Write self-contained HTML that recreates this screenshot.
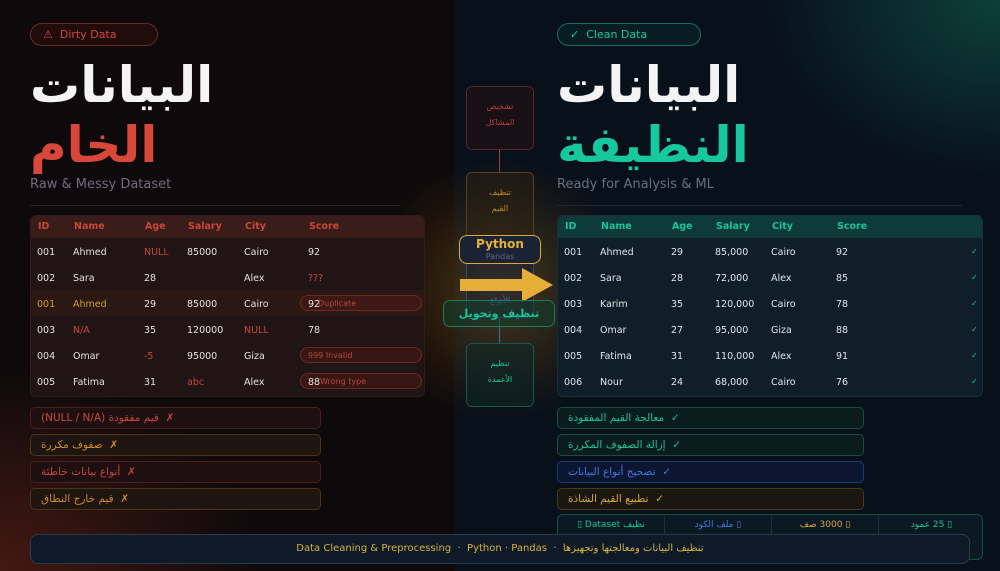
<!DOCTYPE html>
<html><head><meta charset="utf-8"><style>
*{margin:0;padding:0;box-sizing:border-box}
body{width:1000px;height:571px;overflow:hidden;position:relative;font-family:"DejaVu Sans","Liberation Sans","Noto Sans CJK SC",sans-serif;background:#0a0a0e}
.abs{position:absolute}
.bgL{left:0;top:0;width:455px;height:571px;background:radial-gradient(ellipse 260px 200px at 0px 571px,rgba(150,45,28,.4),transparent),#0e0a0b}
.bgR{left:455px;top:0;width:545px;height:571px;background:radial-gradient(ellipse 240px 180px at 545px 0px,rgba(20,130,100,.42),transparent),#08101a}
.glow{left:370px;top:160px;width:260px;height:260px;border-radius:50%;background:radial-gradient(circle,rgba(200,140,30,.32),rgba(120,70,10,.12) 55%,transparent 72%)}
.pill{height:23px;border-radius:12px;font-size:11px;line-height:21px;padding-left:12px}
.t1{font-size:50px;font-weight:bold;direction:rtl;line-height:60px;font-family:"DejaVu Sans","Noto Sans CJK SC",sans-serif}
.sub{font-size:13px;color:#6b6f7a}
.tbl{border-radius:6px;font-size:9.5px}
.hd{height:22px;border-radius:6px 6px 0 0;font-weight:bold;font-size:9.5px}
.c{position:absolute}
.iss{height:22px;border-radius:5px;font-size:10.5px;line-height:20px;direction:rtl;text-align:left;padding-left:10px}
.fb{border-radius:6px;font-size:8px;text-align:center;line-height:16px;direction:rtl}
</style></head><body>
<div class="abs bgL"></div><div class="abs bgR"></div><div class="abs glow"></div>

<div class="abs pill" style="left:30px;top:23px;width:128px;border:1px solid #6a2a22;color:#d24a3a;background:rgba(80,20,15,.3)">⚠&nbsp; Dirty Data</div>
<div class="abs t1" style="left:30px;top:55px;color:#f4f4f6">البيانات</div>
<div class="abs t1" style="left:30px;top:115px;color:#d9473a">الخام</div>
<div class="abs sub" style="left:30px;top:177px">Raw &amp; Messy Dataset</div>
<div class="abs" style="left:30px;top:205px;width:370px;height:1px;background:#2a2226"></div>

<div class="abs pill" style="left:557px;top:23px;width:144px;border:1px solid #16705c;color:#1fc79c;background:rgba(10,60,50,.3)">✓&nbsp; Clean Data</div>
<div class="abs t1" style="left:557px;top:55px;color:#f4f4f6">البيانات</div>
<div class="abs t1" style="left:557px;top:115px;color:#17c79d">النظيفة</div>
<div class="abs sub" style="left:557px;top:177px">Ready for Analysis &amp; ML</div>
<div class="abs" style="left:557px;top:205px;width:405px;height:1px;background:#1a2a33"></div>

<div class="abs tbl" style="left:30px;top:215px;width:395px;height:182px;background:#201414;border:1px solid #2e1c1a">
<div class="hd" style="background:#3a1c18;color:#c9473a;position:relative">
<span class="c" style="left:7px;top:5px">ID</span><span class="c" style="left:43px;top:5px">Name</span><span class="c" style="left:114px;top:5px">Age</span><span class="c" style="left:157px;top:5px">Salary</span><span class="c" style="left:214px;top:5px">City</span><span class="c" style="left:278px;top:5px">Score</span></div>
</div>
<div class="abs" style="left:30px;top:238px;width:395px;height:160px;color:#e6e2e2;font-size:9.5px">
<div style="position:absolute;top:0;height:26px;width:100%"><span class="c" style="left:7px;top:9px">001</span><span class="c" style="left:43px;top:9px">Ahmed</span><span class="c" style="left:114px;top:9px;color:#c9473a">NULL</span><span class="c" style="left:157px;top:9px">85000</span><span class="c" style="left:214px;top:9px">Cairo</span><span class="c" style="left:278px;top:9px">92</span></div>
<div style="position:absolute;top:26px;height:26px;width:100%"><span class="c" style="left:7px;top:9px">002</span><span class="c" style="left:43px;top:9px">Sara</span><span class="c" style="left:114px;top:9px">28</span><span class="c" style="left:214px;top:9px">Alex</span><span class="c" style="left:278px;top:9px;color:#c9473a">???</span></div>
<div style="position:absolute;top:52px;height:26px;width:100%;background:rgba(60,30,20,.4)"><span class="c" style="left:7px;top:9px;color:#c9a02a">001</span><span class="c" style="left:43px;top:9px;color:#c9a02a">Ahmed</span><span class="c" style="left:114px;top:9px">29</span><span class="c" style="left:157px;top:9px">85000</span><span class="c" style="left:214px;top:9px">Cairo</span><span class="c" style="left:270px;top:5px;width:122px;height:16px;border:1px solid #6a2a22;border-radius:8px;background:rgba(90,25,20,.4)"></span><span class="c" style="left:278px;top:9px">92</span><span class="c" style="left:288px;top:9px;font-size:8px;color:#b8473a">Duplicate</span></div>
<div style="position:absolute;top:78px;height:26px;width:100%"><span class="c" style="left:7px;top:9px">003</span><span class="c" style="left:43px;top:9px;color:#c9473a">N/A</span><span class="c" style="left:114px;top:9px">35</span><span class="c" style="left:157px;top:9px">120000</span><span class="c" style="left:214px;top:9px;color:#c9473a">NULL</span><span class="c" style="left:278px;top:9px">78</span></div>
<div style="position:absolute;top:104px;height:26px;width:100%"><span class="c" style="left:7px;top:9px">004</span><span class="c" style="left:43px;top:9px">Omar</span><span class="c" style="left:114px;top:9px;color:#c9473a">-5</span><span class="c" style="left:157px;top:9px">95000</span><span class="c" style="left:214px;top:9px">Giza</span><span class="c" style="left:270px;top:5px;width:122px;height:16px;border:1px solid #6a2a22;border-radius:8px;background:rgba(90,25,20,.4)"></span><span class="c" style="left:278px;top:9px;font-size:8px;color:#b8473a">999 Invalid</span></div>
<div style="position:absolute;top:130px;height:26px;width:100%"><span class="c" style="left:7px;top:9px">005</span><span class="c" style="left:43px;top:9px">Fatima</span><span class="c" style="left:114px;top:9px">31</span><span class="c" style="left:157px;top:9px;color:#c9473a">abc</span><span class="c" style="left:214px;top:9px">Alex</span><span class="c" style="left:270px;top:5px;width:122px;height:16px;border:1px solid #6a2a22;border-radius:8px;background:rgba(90,25,20,.4)"></span><span class="c" style="left:278px;top:9px">88</span><span class="c" style="left:290px;top:9px;font-size:8px;color:#b8473a">Wrong type</span></div>
</div>

<div class="abs tbl" style="left:557px;top:215px;width:426px;height:182px;background:#0f1e28;border:1px solid #16303a">
<div class="hd" style="background:#0f3a3a;color:#19c49a;position:relative">
<span class="c" style="left:7px;top:5px">ID</span><span class="c" style="left:43px;top:5px">Name</span><span class="c" style="left:114px;top:5px">Age</span><span class="c" style="left:158px;top:5px">Salary</span><span class="c" style="left:214px;top:5px">City</span><span class="c" style="left:279px;top:5px">Score</span></div>
</div>
<div class="abs" style="left:557px;top:240px;width:426px;height:157px;color:#e0e6ea;font-size:9.5px">
<div style="position:absolute;top:0;height:26px;width:100%"><span class="c" style="left:7px;top:7px">001</span><span class="c" style="left:43px;top:7px">Ahmed</span><span class="c" style="left:114px;top:7px">29</span><span class="c" style="left:158px;top:7px">85,000</span><span class="c" style="left:214px;top:7px">Cairo</span><span class="c" style="left:279px;top:7px">92</span><span class="c" style="left:414px;top:7px;color:#19c49a;font-size:8px">✓</span></div>
<div style="position:absolute;top:26px;height:26px;width:100%"><span class="c" style="left:7px;top:7px">002</span><span class="c" style="left:43px;top:7px">Sara</span><span class="c" style="left:114px;top:7px">28</span><span class="c" style="left:158px;top:7px">72,000</span><span class="c" style="left:214px;top:7px">Alex</span><span class="c" style="left:279px;top:7px">85</span><span class="c" style="left:414px;top:7px;color:#19c49a;font-size:8px">✓</span></div>
<div style="position:absolute;top:52px;height:26px;width:100%"><span class="c" style="left:7px;top:7px">003</span><span class="c" style="left:43px;top:7px">Karim</span><span class="c" style="left:114px;top:7px">35</span><span class="c" style="left:158px;top:7px">120,000</span><span class="c" style="left:214px;top:7px">Cairo</span><span class="c" style="left:279px;top:7px">78</span><span class="c" style="left:414px;top:7px;color:#19c49a;font-size:8px">✓</span></div>
<div style="position:absolute;top:78px;height:26px;width:100%"><span class="c" style="left:7px;top:7px">004</span><span class="c" style="left:43px;top:7px">Omar</span><span class="c" style="left:114px;top:7px">27</span><span class="c" style="left:158px;top:7px">95,000</span><span class="c" style="left:214px;top:7px">Giza</span><span class="c" style="left:279px;top:7px">88</span><span class="c" style="left:414px;top:7px;color:#19c49a;font-size:8px">✓</span></div>
<div style="position:absolute;top:104px;height:26px;width:100%"><span class="c" style="left:7px;top:7px">005</span><span class="c" style="left:43px;top:7px">Fatima</span><span class="c" style="left:114px;top:7px">31</span><span class="c" style="left:158px;top:7px">110,000</span><span class="c" style="left:214px;top:7px">Alex</span><span class="c" style="left:279px;top:7px">91</span><span class="c" style="left:414px;top:7px;color:#19c49a;font-size:8px">✓</span></div>
<div style="position:absolute;top:130px;height:26px;width:100%"><span class="c" style="left:7px;top:7px">006</span><span class="c" style="left:43px;top:7px">Nour</span><span class="c" style="left:114px;top:7px">24</span><span class="c" style="left:158px;top:7px">68,000</span><span class="c" style="left:214px;top:7px">Cairo</span><span class="c" style="left:279px;top:7px">76</span><span class="c" style="left:414px;top:7px;color:#19c49a;font-size:8px">✓</span></div>
</div>

<div class="abs iss" style="left:30px;top:407px;width:291px;border:1px solid #4a1e1c;background:#1e1011;color:#c9473a">✗&nbsp; قيم مفقودة (NULL / N/A)</div>
<div class="abs iss" style="left:30px;top:434px;width:291px;border:1px solid #4a3518;background:#1e1510;color:#d28a2a">✗&nbsp; صفوف مكررة</div>
<div class="abs iss" style="left:30px;top:461px;width:291px;border:1px solid #4a1e1c;background:#1e1011;color:#c9473a">✗&nbsp; أنواع بيانات خاطئة</div>
<div class="abs iss" style="left:30px;top:488px;width:291px;border:1px solid #4a3518;background:#1e1510;color:#d28a2a">✗&nbsp; قيم خارج النطاق</div>

<div class="abs iss" style="left:557px;top:407px;width:307px;border:1px solid #15503f;background:#0b1c1f;color:#19c49a">✓&nbsp; معالجة القيم المفقودة</div>
<div class="abs iss" style="left:557px;top:434px;width:307px;border:1px solid #15503f;background:#0b1c1f;color:#19c49a">✓&nbsp; إزالة الصفوف المكررة</div>
<div class="abs iss" style="left:557px;top:461px;width:307px;border:1px solid #1e3a7a;background:#0c1630;color:#3f7ae0">✓&nbsp; تصحيح أنواع البيانات</div>
<div class="abs iss" style="left:557px;top:488px;width:307px;border:1px solid #4a3a18;background:#1a1610;color:#d8a83a">✓&nbsp; تطبيع القيم الشاذة</div>

<div class="abs" style="left:557px;top:514px;width:426px;height:46px;border:1px solid #15503f;border-radius:6px;background:#0b1a22;font-size:9px">
<div class="c" style="left:0;top:0;width:107px;height:20px;border-right:1px solid #1a3040;text-align:center;line-height:20px;color:#19c49a;direction:rtl">نظيف Dataset ▯</div>
<div class="c" style="left:107px;top:0;width:107px;height:20px;border-right:1px solid #1a3040;text-align:center;line-height:20px;color:#3f7ae0;direction:rtl">▯ ملف الكود</div>
<div class="c" style="left:214px;top:0;width:107px;height:20px;border-right:1px solid #1a3040;text-align:center;line-height:20px;color:#d8a83a;direction:rtl">▯ 3000 صف</div>
<div class="c" style="left:321px;top:0;width:105px;height:20px;text-align:center;line-height:20px;color:#19c49a;direction:rtl">▯ 25 عمود</div>
</div>

<div class="abs fb" style="left:466px;top:86px;width:68px;height:64px;border:1px solid #5a2624;background:rgba(40,15,15,.5);color:#b8403a;padding-top:12px">تشخيص<br>المشاكل</div>
<div class="abs" style="left:499px;top:150px;width:1px;height:22px;background:#a8402a"></div>
<div class="abs fb" style="left:466px;top:172px;width:68px;height:73px;border:1px solid #5a4020;background:rgba(50,35,15,.4);color:#c88a2a;padding-top:12px">تنظيف<br>القيم</div>
<div class="abs fb" style="left:466px;top:258px;width:68px;height:60px;border:1px solid #2a4a8a;background:rgba(20,30,60,.4);color:#3f6ac0;padding-top:18px">تحويل<br>الأنواع</div>
<div class="abs" style="left:499px;top:318px;width:1px;height:25px;background:#3f6ac0"></div>
<div class="abs fb" style="left:466px;top:343px;width:68px;height:64px;border:1px solid #155a4a;background:rgba(10,40,40,.5);color:#19c49a;padding-top:12px">تنظيم<br>الأعمدة</div>
<div class="abs" style="left:459px;top:235px;width:82px;height:29px;border:1.5px solid #d8a83a;border-radius:8px;background:#1a2233;text-align:center;color:#e8b23a;font-weight:bold;font-size:12px;line-height:16px">Python<div style="font-size:8px;color:#5a6a8a;font-weight:normal;line-height:10px">Pandas</div></div>
<svg class="abs" style="left:460px;top:268px" width="94" height="34"><path d="M0 11H62V0L93 17L62 34V23H0Z" fill="#f0b43a" opacity=".95"/></svg>
<div class="abs" style="left:443px;top:300px;width:112px;height:27px;border:1px solid #1e7a5a;border-radius:7px;background:rgba(15,60,45,.55);text-align:center;color:#19c49a;font-weight:bold;font-size:11px;line-height:25px;direction:rtl">تنظيف وتحويل</div>

<div class="abs" style="left:30px;top:534px;width:940px;height:30px;border:1px solid #2a3a4a;border-radius:8px;background:#0e1a28;text-align:center;line-height:28px;font-size:10px;color:#d8b23a">Data Cleaning &amp; Preprocessing &nbsp;·&nbsp; Python · Pandas &nbsp;·&nbsp; <span dir="rtl">تنظيف البيانات ومعالجتها وتجهيزها</span></div>
</body></html>
